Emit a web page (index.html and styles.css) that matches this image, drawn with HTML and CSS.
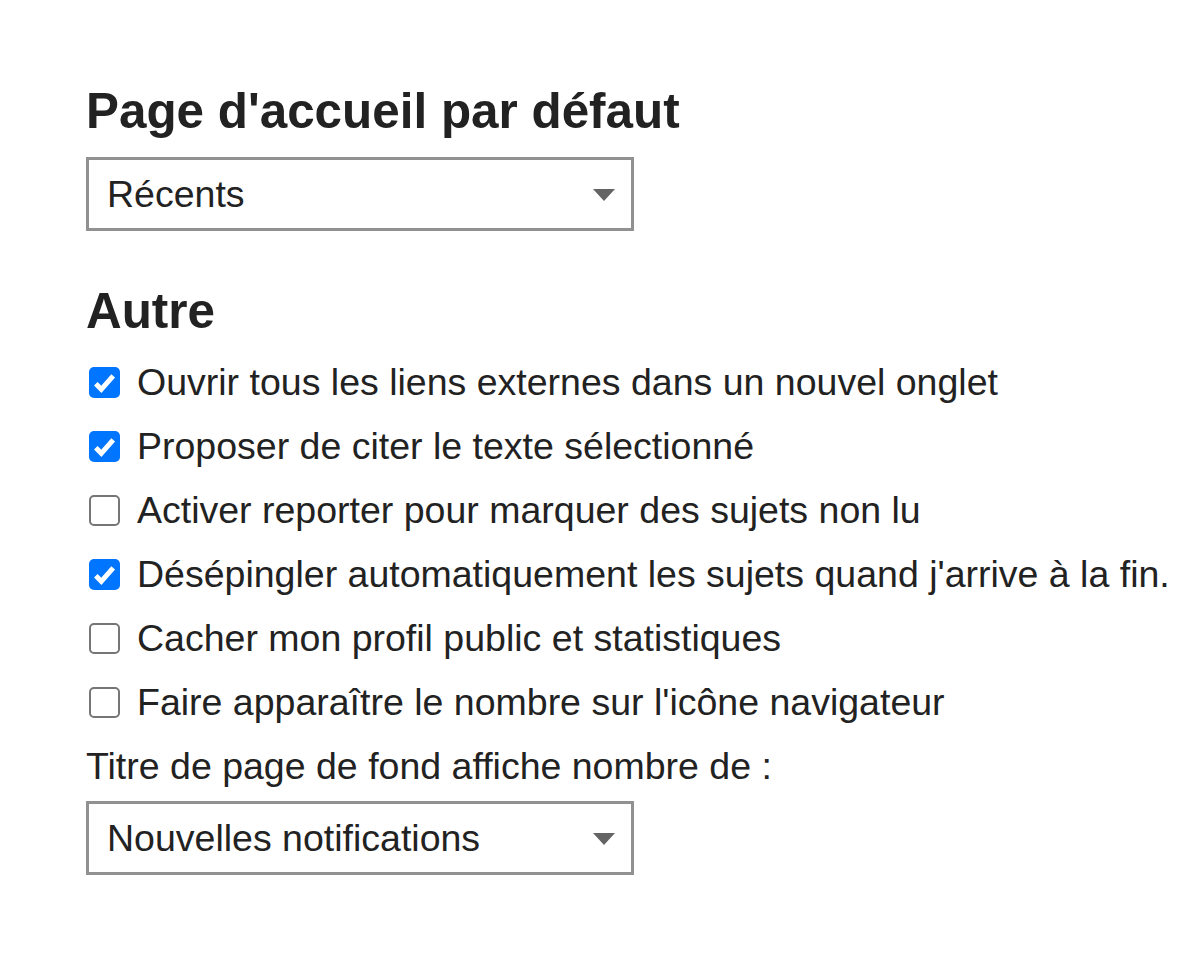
FILE: index.html
```html
<!DOCTYPE html>
<html lang="fr">
<head>
<meta charset="utf-8">
<title>Préférences</title>
<link rel="stylesheet" href="styles.css">
</head>
<body>
<div class="prefs">
  <section class="control-group">
    <h3 class="control-label">Page d'accueil par défaut</h3>
    <div class="select-kit">
      <span class="select-name">Récents</span>
      <svg class="caret" viewBox="0 0 22 12" width="22" height="12"><polygon points="0,0 22,0 11,12" fill="#646464"/></svg>
    </div>
  </section>
  <section class="control-group other">
    <h3 class="control-label">Autre</h3>
    <div class="cb-row"><span class="cb checked"><svg viewBox="0 0 31 31" width="31" height="31"><path d="M6.8 16.8 L12.3 22.3 L24.2 8.8" fill="none" stroke="#fff" stroke-width="5"/></svg></span><span class="cb-label">Ouvrir tous les liens externes dans un nouvel onglet</span></div>
    <div class="cb-row"><span class="cb checked"><svg viewBox="0 0 31 31" width="31" height="31"><path d="M6.8 16.8 L12.3 22.3 L24.2 8.8" fill="none" stroke="#fff" stroke-width="5"/></svg></span><span class="cb-label">Proposer de citer le texte sélectionné</span></div>
    <div class="cb-row"><span class="cb"></span><span class="cb-label">Activer reporter pour marquer des sujets non lu</span></div>
    <div class="cb-row"><span class="cb checked"><svg viewBox="0 0 31 31" width="31" height="31"><path d="M6.8 16.8 L12.3 22.3 L24.2 8.8" fill="none" stroke="#fff" stroke-width="5"/></svg></span><span class="cb-label">Désépingler automatiquement les sujets quand j'arrive à la fin.</span></div>
    <div class="cb-row"><span class="cb"></span><span class="cb-label">Cacher mon profil public et statistiques</span></div>
    <div class="cb-row"><span class="cb"></span><span class="cb-label">Faire apparaître le nombre sur l'icône navigateur</span></div>
    <div class="select-label">Titre de page de fond affiche nombre de :</div>
    <div class="select-kit">
      <span class="select-name">Nouvelles notifications</span>
      <svg class="caret" viewBox="0 0 22 12" width="22" height="12"><polygon points="0,0 22,0 11,12" fill="#646464"/></svg>
    </div>
  </section>
</div>
</body>
</html>
```

FILE: styles.css
```css
html, body {
  margin: 0;
  background: #fff;
}
body {
  font-family: "Liberation Sans", Arial, Helvetica, sans-serif;
  color: #222;
  font-size: 37.5px;
}
.prefs {
  padding: 82px 0 0 86px;
}
.control-label {
  margin: 0 0 16.5px 0;
  font-size: 49.4px;
  line-height: 58.5px;
  font-weight: bold;
}
.other {
  margin-top: 51px;
}
.other .control-label {
  margin-bottom: 15.25px;
}
.select-kit {
  box-sizing: border-box;
  width: 548px;
  height: 74px;
  border: 3px solid #919191;
  background: #fff;
  display: flex;
  align-items: center;
  justify-content: space-between;
  padding: 0 16px 0 18px;
}
.select-name {
  line-height: 52.5px;
}
.caret {
  display: block;
  margin-top: 2px;
}
.cb-row {
  display: flex;
  align-items: center;
  line-height: 52.5px;
  margin-bottom: 11.5px;
  white-space: nowrap;
}
.cb {
  box-sizing: border-box;
  flex: none;
  width: 31px;
  height: 31px;
  margin: 0 17px 0 3px;
  border: 2px solid #767676;
  border-radius: 5px;
  background: #fff;
}
.cb.checked {
  border: none;
  background: #0075ff;
}
.cb svg {
  display: block;
}
.select-label {
  line-height: 52.5px;
  margin-bottom: 8.75px;
}
```
